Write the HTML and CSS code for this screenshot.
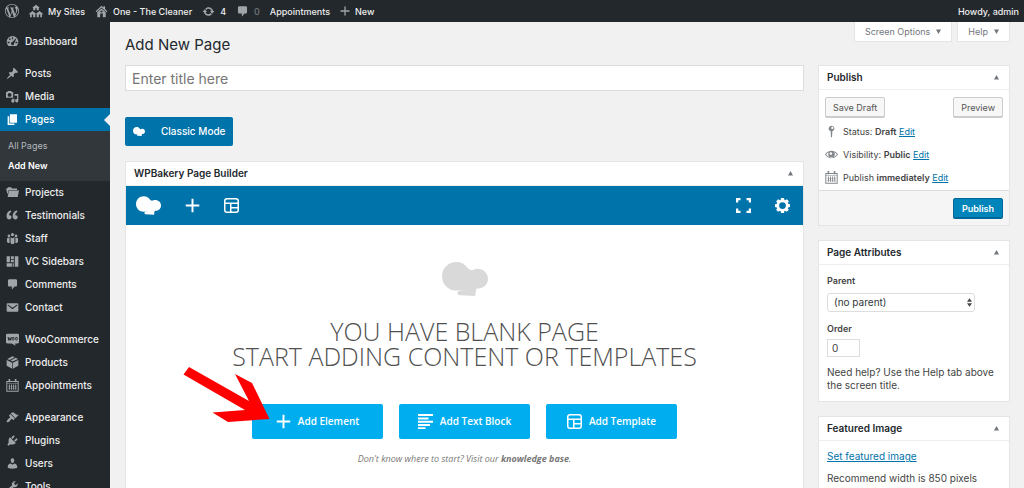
FILE: index.html
```html
<!DOCTYPE html>
<html lang="en">
<head>
    <meta charset="utf-8">
    <title>Add New Page</title>
    <link rel="stylesheet" href="styles.css">
</head>
<body>
<svg class="sprite" aria-hidden="true">
    <symbol id="i-wp" viewBox="0 0 20 20"><path d="M20 10c0-5.51-4.49-10-10-10C4.48 0 0 4.49 0 10c0 5.52 4.48 10 10 10 5.51 0 10-4.48 10-10zM7.78 15.37L4.37 6.22c.55-.02 1.17-.08 1.17-.08.5-.06.44-1.13-.06-1.11 0 0-1.45.11-2.37.11-.18 0-.37 0-.58-.01C4.12 2.69 6.87 1.11 10 1.11c2.33 0 4.45.87 6.05 2.34-.68-.11-1.65.39-1.65 1.58 0 .74.45 1.36.9 2.1.35.61.55 1.36.55 2.46 0 1.49-1.4 5-1.4 5l-3.03-8.37c.54-.02.82-.17.82-.17.5-.05.44-1.25-.06-1.22 0 0-1.44.12-2.38.12-.87 0-2.33-.12-2.33-.12-.5-.03-.56 1.2-.06 1.22l.92.08 1.26 3.41zM17.41 10c.24-.64.74-1.87.43-4.25.7 1.29 1.05 2.71 1.05 4.25 0 3.29-1.73 6.24-4.4 7.78.97-2.59 1.94-5.2 2.92-7.78zM6.1 18.09C3.12 16.65 1.11 13.53 1.11 10c0-1.3.23-2.48.72-3.59C3.25 10.3 4.67 14.2 6.1 18.09zm4.03-6.63l2.58 6.98c-.86.29-1.76.45-2.71.45-.79 0-1.57-.11-2.29-.33.81-2.38 1.62-4.74 2.42-7.1z"/></symbol>
    <symbol id="i-sites" viewBox="0 0 20 20"><path fill-rule="evenodd" d="M10 1l5 4-.8 1L14 5.800V9H6V5.800L5.800 6 5 5zM9 6v3h2V6zM5 10l5 4-.8 1-.2-.2V19H1.500v-4.200L.8 15 0 14zM4 15v4h2v-4zM15 10l5 4-.8 1-.7-.2V19H11v-4.200l-.2.2-.8-1zM14 15v4h2v-4z"/></symbol>
    <symbol id="i-home" viewBox="0 0 20 20"><path fill-rule="evenodd" d="M10 1l3 2.800V2h2.500v4.200L19 9.500 17.800 11 10 4 2.200 11 1 9.500zM10 5.500l6.500 5.800V19h-13v-7.700zM8 13v6h4v-6zM8.500 9v2h3V9z"/></symbol>
    <symbol id="i-update" viewBox="0 0 20 20"><path d="M10.200 3.280c3.530 0 6.430 2.610 6.920 6h2.080l-3.500 4-3.500-4h2.320c-.45-1.970-2.210-3.450-4.320-3.450-1.450 0-2.730.71-3.540 1.780L4.950 5.660C6.230 4.200 8.110 3.280 10.200 3.280zm-.4 13.440c-3.520 0-6.430-2.610-6.920-6H.8l3.500-4c1.170 1.330 2.330 2.670 3.500 4H5.480c.45 1.970 2.210 3.450 4.320 3.450 1.450 0 2.730-.71 3.540-1.780l1.710 1.950c-1.280 1.460-3.150 2.380-5.250 2.380z"/></symbol>
    <symbol id="i-comment" viewBox="0 0 20 20"><path d="M5 2h10c1.100 0 2 .9 2 2v7c0 1.100-.9 2-2 2h-2l-4 5v-5H5c-1.100 0-2-.9-2-2V4c0-1.100.9-2 2-2z"/></symbol>
    <symbol id="i-plus" viewBox="0 0 20 20"><path d="M8.700 1h2.600v7.700H19v2.600h-7.700V19H8.700v-7.700H1V8.700h7.700z"/></symbol>
    <symbol id="i-dashboard" viewBox="0 0 20 20"><path fill-rule="evenodd" d="M3.800 17h12.400A9 9 0 0 0 19 10.500 9 9 0 0 0 1 10.500 9 9 0 0 0 3.800 17zM9 3.500h2v3H9zM4.300 6l1.400-1.400L7.500 6.500 6 8zM2.500 10.500h3v2h-3zM14.500 10.500h3v2h-3zM14.800 5.200l1 1-3.300 6.300a2.500 2.500 0 1 1-2.800-1.800z"/></symbol>
    <symbol id="i-pin" viewBox="0 0 20 20"><path d="M10.440 3.020l1.820-1.820 6.360 6.350-1.830 1.820c-1.050-.68-2.480-.57-3.410.36l-.75.75c-.92.93-1.040 2.350-.35 3.410l-1.830 1.820-2.410-2.410-2.800 2.790c-.42.42-3.380 2.710-3.800 2.290s1.860-3.390 2.280-3.810l2.790-2.790L4.100 9.360l1.830-1.820c1.050.69 2.480.57 3.400-.36l.75-.75c.93-.92 1.050-2.350.36-3.410z"/></symbol>
    <symbol id="i-media" viewBox="0 0 20 20"><path fill-rule="evenodd" d="M0 3h2l1-1.500h5L9 3h2v9H0zM5.500 4.500a3 3 0 1 0 0 6 3 3 0 0 0 0-6zM13 6h6v10.500a2.500 2.500 0 1 1-2-2.400V9h-4zM9 13.500h4v3.300a2.500 2.500 0 1 1-2-2.300H9z"/></symbol>
    <symbol id="i-page" viewBox="0 0 20 20"><path d="M6 15V2h11v13H6zm-1 1h8v2.500H2.500V5H5v11z"/></symbol>
    <symbol id="i-folder" viewBox="0 0 20 20"><path d="M0 4h2l1-2h5l1 2h8v2H4L2.500 13zM4.500 7H20l-2 10H2.500z"/></symbol>
    <symbol id="i-quote" viewBox="0 0 20 20"><path d="M8.540 12.740c0-.87-.24-1.610-.72-2.220-.73-.92-2.140-1.030-2.960-.85-.34-1.930 1.300-4.390 3.420-5.450L6.650 1.940C3.450 3.460.31 6.960.85 11.370 1.190 14.160 2.800 16 5.080 16c1 0 1.830-.29 2.480-.88.66-.59.98-1.380.98-2.380zm9.430 0c0-.87-.24-1.610-.72-2.220-.73-.92-2.140-1.030-2.960-.85-.34-1.930 1.300-4.390 3.420-5.450l-1.630-2.280c-3.200 1.520-6.340 5.020-5.800 9.430.34 2.790 1.950 4.630 4.230 4.630 1 0 1.830-.29 2.480-.88.66-.59.98-1.380.98-2.380z"/></symbol>
    <symbol id="i-staff" viewBox="0 0 20 20"><circle cx="10" cy="4" r="2.500"/><circle cx="4.500" cy="6" r="2"/><circle cx="15.500" cy="6" r="2"/><path d="M7 8l3 1.500L13 8v8l-1 2.500H8L7 16zM1.500 9.500l4-1V17H3l-1.500-2zM18.500 9.500l-4-1V17H17l1.500-2z"/></symbol>
    <symbol id="i-sidebars" viewBox="0 0 20 20"><path d="M1 2h5v9H1zM1 12.500h8V18H1zM7.500 2H12v4H7.500zM7.500 7.200H12V11H7.500zM13.500 2H19v16h-5.500zM10.200 12.500H12V18h-1.800z"/></symbol>
    <symbol id="i-mail" viewBox="0 0 20 20"><path fill-rule="evenodd" d="M2.500 3.500h15A1.500 1.500 0 0 1 19 5v10a1.500 1.500 0 0 1-1.500 1.500h-15A1.500 1.500 0 0 1 1 15V5a1.500 1.500 0 0 1 1.500-1.500zM3 5.200L2.300 6.500 10 12.800l7.700-6.300L17 5.200 10 10.500z"/></symbol>
    <symbol id="i-woo" viewBox="0 0 20 20"><path fill-rule="evenodd" d="M2 1h16a2 2 0 0 1 2 2v11a2 2 0 0 1-2 2h-4l.5 3.500L9 16H2a2 2 0 0 1-2-2V3a2 2 0 0 1 2-2zM2.500 6l1 5.500h1.700L6 9.500l.6 2h1.200L9 6H7.800l-.6 3L6.500 7h-1l-.8 2.500L4 6zM11 6a2 2.700 0 1 0 .1 0zm0 1.500a.8 1.300 0 1 1-.1 0zM16 6a2 2.700 0 1 0 .1 0zm0 1.500a.8 1.300 0 1 1-.1 0z"/></symbol>
    <symbol id="i-box" viewBox="0 0 20 20"><path d="M10 .5l3.500 1.500-8 4L2 4.800zM15 2.700l3.500 2L10 8.500 7 7zM1 6.200l8.500 4V19.500L1 15zM19 6.200V15l-8.500 4.500v-9.300z"/></symbol>
    <symbol id="i-calendar" viewBox="0 0 20 20"><path fill-rule="evenodd" d="M4 0h2.500v3h7V0H16v3h3.500v16.500H.5V3H4zM2 7v11h16V7zM2 4.500V6h16V4.500h-2V5h-2.500v-.5h-7V5H4v-.5zM4.500 8.500H6v8H4.500zM7.800 8.500h1.500v8H7.800zM11 8.500h1.500v8H11zM14.200 8.500h1.500v8h-1.500z"/><path d="M3 11h14v.8H3zM3 14h14v.8H3z" opacity=".6"/></symbol>
    <symbol id="i-brush" viewBox="0 0 20 20"><path d="M14.480 11.060L7.410 3.990l1.500-1.500c.5-.56 2.300-.47 3.510.32 1.210.8 1.430 1.280 2.910 2.100 1.180.64 2.450 1.260 4.450.85zm-.71.71L6.700 4.700 4.930 6.470c-.39.39-.39 1.020 0 1.410l1.060 1.060c.39.39.39 1.030 0 1.420-.6.6-1.430 1.110-2.210 1.690-.35.26-.7.53-1.010.84C1.430 14.230.4 16.080 1.400 17.070c.99 1 2.840-.03 4.180-1.360.31-.31.58-.66.85-1.020.57-.78 1.080-1.610 1.690-2.210.39-.39 1.020-.39 1.410 0l1.060 1.060c.39.39 1.020.39 1.410 0z"/></symbol>
    <symbol id="i-plugin" viewBox="0 0 20 20"><path d="M13.110 4.360L9.870 7.600 8 5.730l3.240-3.240c.35-.34 1.050-.2 1.560.32.52.51.66 1.210.31 1.550zm-8 1.770l.91-1.120 9.010 9.010-1.190.84c-.71.71-2.630 1.160-3.820 1.160H6.140L4.900 17.260c-.59.59-1.540.59-2.120 0-.59-.58-.59-1.530 0-2.120l1.240-1.240v-3.880c0-1.130.4-3.190 1.090-3.890zm7.260 3.970l3.240-3.240c.34-.35 1.040-.21 1.550.31.52.51.66 1.210.31 1.550l-3.240 3.250z"/></symbol>
    <symbol id="i-user" viewBox="0 0 20 20"><path d="M10 9.250c-2.270 0-2.730-3.440-2.730-3.440C7 4.020 7.820 2 9.970 2c2.160 0 2.980 2.020 2.710 3.810 0 0-.41 3.440-2.680 3.440zm0 2.570L12.720 10c2.390 0 4.520 2.330 4.520 4.530v2.490s-3.650 1.130-7.240 1.130c-3.650 0-7.240-1.130-7.240-1.130v-2.490c0-2.250 1.940-4.480 4.470-4.480z"/></symbol>
    <symbol id="i-tools" viewBox="0 0 20 20"><path d="M16.680 9.770c-1.340 1.340-3.300 1.670-4.950.99l-5.410 6.520c-.99.99-2.590.99-3.580 0s-.99-2.590 0-3.570l6.520-5.420c-.68-1.650-.35-3.610.99-4.950 1.280-1.280 3.120-1.620 4.720-1.060l-2.890 2.890 2.820 2.820 2.860-2.870c.53 1.580.18 3.390-1.080 4.650z"/></symbol>
    <symbol id="i-post-status" viewBox="0 0 20 20"><path fill-rule="evenodd" d="M10 1a4.500 4.500 0 0 1 1.300 8.800L10.800 19H9.200l-.5-9.200A4.500 4.500 0 0 1 10 1zm1.200 1.800a1.700 1.700 0 1 0 .1 0z"/></symbol>
    <symbol id="i-eye" viewBox="0 0 20 20"><path fill-rule="evenodd" d="M0 10c4.500-7.500 15.500-7.500 20 0-4.500 7.500-15.500 7.500-20 0zm1.800 0c2 2.800 4.500 4 8.200 4s6.200-1.200 8.200-4c-1.200-1.700-2.500-2.800-4.200-3.400a5 5 0 1 1-8 0C4.300 7.200 3 8.300 1.800 10zM9 6.500a2 2 0 1 0 .1 0z"/></symbol>
    <symbol id="i-layout" viewBox="0 0 20 20"><g fill="none" stroke="currentColor" stroke-width="2"><rect x="1" y="1" width="18" height="18" rx="3"/><path d="M1 7h18M9 7v12M9 13h10"/></g></symbol>
    <symbol id="i-lines" viewBox="0 0 20 20"><path d="M0 0h20v2.700H0zM0 4.500h14v2.700H0zM0 9h20v2.700H0zM0 13.300h16V16H0zM0 17.600h10V20H0z"/></symbol>
    <symbol id="i-fullscreen" viewBox="0 0 20 20"><path d="M0 0h6v3H3v3H0zM14 0h6v6h-3V3h-3zM0 14h3v3h3v3H0zM17 14h3v6h-6v-3h3z"/></symbol>
    <symbol id="i-gear" viewBox="0 0 20 20"><path fill-rule="evenodd" d="M8 0h4l.6 2.700 1 .4L16 1.600l2.500 2.700-1.400 2.300.4 1L20 8.200v3.700l-2.600.6-.4 1 1.400 2.300-2.600 2.600-2.300-1.400-1 .4L12 20H8l-.6-2.600-1-.4-2.300 1.400-2.600-2.600 1.400-2.300-.4-1L0 11.900V8.200l2.600-.6.4-1-1.400-2.300 2.600-2.700 2.300 1.500 1-.4zM10 5.500a4.500 4.500 0 1 0 0 9 4.500 4.500 0 0 0 0-9z"/></symbol>
    <symbol id="i-bakery" viewBox="0 0 46 34"><path d="M14.500 0c5.500 0 8.500 2.600 11.500 6.200 1.800 2 3.800 2.600 6 1.200C38.500 5 46 9.500 46 16.800c0 6-4.600 9.800-10.500 9.800-1 0-1.300.5-1.500 1.500L33.200 34 18 33.200c-3-.2-3.600-3.400-.8-4.200 2-.6 3.800-.6 5.300-1.600C20 28.200 17 28.700 14 28.500 6 28.500 0 22 0 14.200S6 0 14.500 0z"/></symbol>
    <symbol id="i-up" viewBox="0 0 10 10"><path d="M5 0l5 9H0z"/></symbol>
    <symbol id="i-down" viewBox="0 0 10 10"><path d="M5 10L0 1h10z"/></symbol>
</svg>

<header class="adminbar">
    <a href="#" aria-label="WordPress"><svg class="icon icon-lg"><use href="#i-wp"/></svg></a>
    <a href="#"><svg class="icon icon-lg"><use href="#i-sites"/></svg>My Sites</a>
    <a href="#"><svg class="icon"><use href="#i-home"/></svg>One - The Cleaner</a>
    <a href="#"><svg class="icon"><use href="#i-update"/></svg>4</a>
    <a href="#"><svg class="icon"><use href="#i-comment"/></svg><span class="dim">0</span></a>
    <a href="#">Appointments</a>
    <a href="#"><svg class="icon icon-sm"><use href="#i-plus"/></svg>New</a>
    <a href="#" class="account">Howdy, admin</a>
</header>

<div class="wrap">
    <nav class="menu">
        <a href="#"><svg class="icon"><use href="#i-dashboard"/></svg>Dashboard</a>
        <hr>
        <a href="#"><svg class="icon"><use href="#i-pin"/></svg>Posts</a>
        <a href="#"><svg class="icon"><use href="#i-media"/></svg>Media</a>
        <a href="#" class="current"><svg class="icon"><use href="#i-page"/></svg>Pages</a>
        <div class="submenu">
            <a href="#">All Pages</a>
            <a href="#" class="active">Add New</a>
        </div>
        <a href="#"><svg class="icon"><use href="#i-folder"/></svg>Projects</a>
        <a href="#"><svg class="icon"><use href="#i-quote"/></svg>Testimonials</a>
        <a href="#"><svg class="icon"><use href="#i-staff"/></svg>Staff</a>
        <a href="#"><svg class="icon"><use href="#i-sidebars"/></svg>VC Sidebars</a>
        <a href="#"><svg class="icon"><use href="#i-comment"/></svg>Comments</a>
        <a href="#"><svg class="icon"><use href="#i-mail"/></svg>Contact</a>
        <hr>
        <a href="#"><svg class="icon"><use href="#i-woo"/></svg>WooCommerce</a>
        <a href="#"><svg class="icon"><use href="#i-box"/></svg>Products</a>
        <a href="#"><svg class="icon"><use href="#i-calendar"/></svg>Appointments</a>
        <hr>
        <a href="#"><svg class="icon"><use href="#i-brush"/></svg>Appearance</a>
        <a href="#"><svg class="icon"><use href="#i-plugin"/></svg>Plugins</a>
        <a href="#"><svg class="icon"><use href="#i-user"/></svg>Users</a>
        <a href="#"><svg class="icon"><use href="#i-tools"/></svg>Tools</a>
    </nav>

    <div class="content">
        <div class="page-top">
            <h1>Add New Page</h1>
            <div class="screen-tabs">
                <button type="button">Screen Options <svg class="caret"><use href="#i-down"/></svg></button>
                <button type="button">Help <svg class="caret"><use href="#i-down"/></svg></button>
            </div>
        </div>

        <div class="columns">
            <main>
                <input type="text" class="title-input" placeholder="Enter title here" aria-label="Title">
                <button type="button" class="classic-mode"><svg class="bakery-sm"><use href="#i-bakery"/></svg>Classic Mode</button>

                <section class="box">
                    <div class="box-header">
                        <h2>WPBakery Page Builder</h2>
                        <button type="button" class="toggle" aria-label="Toggle panel"><svg class="caret"><use href="#i-up"/></svg></button>
                    </div>
                    <div class="toolbar">
                        <a href="#" aria-label="WPBakery"><svg class="bakery-md"><use href="#i-bakery"/></svg></a>
                        <button type="button" aria-label="Add element"><svg class="tool"><use href="#i-plus"/></svg></button>
                        <button type="button" aria-label="Templates"><svg class="tool"><use href="#i-layout"/></svg></button>
                        <span class="spacer"></span>
                        <button type="button" aria-label="Full screen"><svg class="tool"><use href="#i-fullscreen"/></svg></button>
                        <button type="button" aria-label="Settings"><svg class="tool"><use href="#i-gear"/></svg></button>
                    </div>
                    <div class="blank">
                        <svg class="bakery-lg"><use href="#i-bakery"/></svg>
                        <h3>YOU HAVE BLANK PAGE<br>START ADDING CONTENT OR TEMPLATES</h3>
                        <div class="actions">
                            <button type="button"><svg class="tool"><use href="#i-plus"/></svg>Add Element</button>
                            <button type="button"><svg class="tool"><use href="#i-lines"/></svg>Add Text Block</button>
                            <button type="button"><svg class="tool"><use href="#i-layout"/></svg>Add Template</button>
                            <svg class="pointer" viewBox="0 0 87 57"><path d="M6 1l60 34-14-27 17 9 17.500 36L45 56 29.500 46.500 62 44 .5 8.500z"/></svg>
                        </div>
                        <p class="hint">Don't know where to start? Visit our <a href="#">knowledge base</a>.</p>
                    </div>
                </section>
            </main>

            <aside>
                <section class="box">
                    <div class="box-header">
                        <h2>Publish</h2>
                        <button type="button" class="toggle" aria-label="Toggle panel"><svg class="caret"><use href="#i-up"/></svg></button>
                    </div>
                    <div class="publish">
                        <div class="publish-buttons">
                            <button type="button" class="btn">Save Draft</button>
                            <button type="button" class="btn">Preview</button>
                        </div>
                        <p><svg class="icon"><use href="#i-post-status"/></svg><span>Status: <b>Draft</b> <a href="#">Edit</a></span></p>
                        <p><svg class="icon"><use href="#i-eye"/></svg><span>Visibility: <b>Public</b> <a href="#">Edit</a></span></p>
                        <p><svg class="icon"><use href="#i-calendar"/></svg><span>Publish <b>immediately</b> <a href="#">Edit</a></span></p>
                    </div>
                    <div class="publish-footer">
                        <button type="submit" class="btn btn-primary">Publish</button>
                    </div>
                </section>

                <section class="box">
                    <div class="box-header">
                        <h2>Page Attributes</h2>
                        <button type="button" class="toggle" aria-label="Toggle panel"><svg class="caret"><use href="#i-up"/></svg></button>
                    </div>
                    <div class="attributes">
                        <label for="parent">Parent</label>
                        <div class="select">
                            <select id="parent"><option>(no parent)</option></select>
                            <svg class="arrows" viewBox="0 0 6 10"><path d="M3 0l3 4H0zM3 10L0 6h6z"/></svg>
                        </div>
                        <label for="order">Order</label>
                        <input type="text" id="order" value="0">
                        <p>Need help? Use the Help tab above the screen title.</p>
                    </div>
                </section>

                <section class="box">
                    <div class="box-header">
                        <h2>Featured Image</h2>
                        <button type="button" class="toggle" aria-label="Toggle panel"><svg class="caret"><use href="#i-up"/></svg></button>
                    </div>
                    <div class="featured">
                        <a href="#">Set featured image</a>
                        <p>Recommend width is 850 pixels</p>
                    </div>
                </section>
            </aside>
        </div>
    </div>
</div>
</body>
</html>
```
FILE: styles.css
```css
:root {
    --dark: #23282d;
    --submenu: #32373c;
    --blue: #0073aa;
    --bright: #00aef0;
    --bg: #f1f1f1;
    --border: #e5e5e5;
    --text: #444;
}

* {
    margin: 0;
    padding: 0;
    box-sizing: border-box;
}

body {
    display: flex;
    flex-direction: column;
    height: 100vh;
    overflow: hidden;
    background: var(--bg);
    color: var(--text);
    font: 10px/13px Inter, "Liberation Sans", sans-serif;
}

button,
input,
select {
    font: inherit;
    color: inherit;
}

button {
    border: 0;
    background: none;
    cursor: pointer;
}

a {
    color: var(--blue);
}

svg {
    flex: none;
    fill: currentColor;
}

.sprite {
    position: absolute;
    width: 0;
    height: 0;
}

.icon {
    width: 13px;
    height: 13px;
}

.icon-lg {
    width: 14px;
    height: 14px;
}

.icon-sm {
    width: 10px;
    height: 10px;
}

.caret {
    width: 5px;
    height: 5px;
}

/* admin bar */
.adminbar {
    flex: none;
    display: flex;
    align-items: center;
    gap: 10px;
    height: 22px;
    padding: 0 5px;
    background: var(--dark);
}

.adminbar a {
    display: flex;
    align-items: center;
    gap: 5px;
    color: #eee;
    font-size: 9px;
    font-weight: 500;
    text-decoration: none;
}

.adminbar .icon {
    color: #a0a5aa;
}

.adminbar .dim {
    color: #72777c;
}

.adminbar .account {
    margin-left: auto;
}

.wrap {
    flex: 1;
    display: flex;
    min-height: 0;
}

/* side menu */
.menu {
    flex: none;
    width: 110px;
    padding-top: 8px;
    overflow: hidden;
    background: var(--dark);
}

.menu > a {
    display: flex;
    align-items: center;
    gap: 6px;
    height: 23px;
    padding-left: 6px;
    color: #eee;
    font-weight: 500;
    text-decoration: none;
}

.menu .icon {
    color: #a0a5aa;
}

.menu hr {
    height: 9px;
    border: 0;
}

.menu > .current {
    position: relative;
    background: var(--blue);
    color: #fff;
}

.menu .current .icon {
    color: #fff;
}

.menu .current::after {
    content: "";
    position: absolute;
    right: 0;
    top: 6px;
    border: 6px solid transparent;
    border-left: 0;
    border-right-color: var(--bg);
}

.submenu {
    display: grid;
    padding: 5px 8px;
    background: var(--submenu);
}

.submenu a {
    font-size: 9px;
    line-height: 20px;
    color: #b4b9be;
    text-decoration: none;
}

.submenu .active {
    color: #fff;
    font-weight: 600;
}

/* page */
.content {
    flex: 1;
    min-width: 0;
    padding: 0 14px 0 15px;
}

.page-top {
    display: flex;
    justify-content: space-between;
    height: 43px;
}

h1 {
    padding-top: 13px;
    color: #23282d;
    font-size: 15px;
    line-height: 20px;
    font-weight: 400;
}

.screen-tabs {
    display: flex;
    align-items: flex-start;
    gap: 5px;
}

.screen-tabs button {
    display: flex;
    align-items: center;
    gap: 6px;
    height: 20px;
    padding: 0 10px;
    border: 1px solid var(--border);
    border-top: 0;
    background: #fff;
    color: #72777c;
    font-size: 9px;
}

.columns {
    display: grid;
    grid-template-columns: minmax(0, 1fr) 192px;
    gap: 14px;
}

.title-input {
    display: block;
    width: 100%;
    height: 26px;
    padding: 0 6px;
    border: 1px solid #ddd;
    background: #fff;
    font-size: 14px;
}

.title-input::placeholder {
    color: #757575;
}

.classic-mode {
    display: flex;
    align-items: center;
    gap: 16px;
    height: 29px;
    margin: 26px 0 15px;
    padding: 0 8px;
    border-radius: 2px;
    background: var(--blue);
    color: #fff;
    font-weight: 500;
}

.bakery-sm {
    width: 12px;
    height: 9px;
}

.bakery-md {
    width: 25px;
    height: 19px;
}

.bakery-lg {
    width: 46px;
    height: 34px;
    color: #d9d9d9;
}

.box {
    border: 1px solid var(--border);
    background: #fff;
}

.box-header {
    display: flex;
    align-items: center;
    justify-content: space-between;
    height: 24px;
    padding: 0 8px;
    border-bottom: 1px solid #eee;
}

.box-header h2 {
    color: #23282d;
    font-size: 10px;
    font-weight: 600;
}

.toggle {
    display: flex;
    padding: 2px;
    color: #72777c;
}

/* builder */
.toolbar {
    display: flex;
    align-items: center;
    gap: 24px;
    height: 39px;
    padding: 0 13px 0 10px;
    background: var(--blue);
    color: #fff;
}

.toolbar a,
.toolbar button {
    display: flex;
    color: #fff;
}

.spacer {
    flex: 1;
}

.tool {
    width: 15px;
    height: 15px;
}

.blank {
    display: flex;
    flex-direction: column;
    align-items: center;
    padding: 37px 0 48px;
    font-family: "Open Sans", sans-serif;
}

.blank h3 {
    margin: 23px 0 35px;
    color: #505050;
    font-size: 25px;
    line-height: 25px;
    font-weight: 300;
    text-align: center;
}

.actions {
    position: relative;
    display: flex;
    gap: 16px;
}

.actions button {
    display: flex;
    align-items: center;
    justify-content: center;
    gap: 7px;
    width: 131px;
    height: 35px;
    border-radius: 2px;
    background: var(--bright);
    color: #fff;
    font-size: 10px;
    font-weight: 600;
}

/* red arrow lies over the first action */
.pointer {
    position: absolute;
    left: -69px;
    top: -38px;
    width: 87px;
    height: 57px;
    color: #fe0000;
    pointer-events: none;
}

.hint {
    margin-top: 13px;
    color: #777;
    font-size: 9px;
    font-style: italic;
}

.hint a {
    color: inherit;
    font-weight: 700;
    text-decoration: none;
}

/* sidebar boxes */
aside {
    display: grid;
    align-content: start;
    gap: 14px;
}

.btn {
    height: 20px;
    padding: 0 7px;
    border: 1px solid #ccc;
    border-radius: 2px;
    background: #f7f7f7;
    color: #555;
    font-size: 9px;
    box-shadow: 0 1px 0 #ccc;
}

.btn-primary {
    padding: 0 8px;
    border-color: #006799;
    background: #0085ba;
    color: #fff;
    font-weight: 600;
    box-shadow: 0 1px 0 #006799;
}

.publish {
    padding: 7px 6px 1px;
    font-size: 9px;
}

.publish-buttons {
    display: flex;
    justify-content: space-between;
    margin-bottom: 3px;
}

.publish p {
    display: flex;
    align-items: center;
    gap: 5px;
    height: 23px;
}

.publish .icon {
    color: #82878c;
}

.publish b {
    font-weight: 600;
}

.publish-footer {
    display: flex;
    justify-content: flex-end;
    padding: 7px 6px;
    border-top: 1px solid #ddd;
    background: #f5f5f5;
}

.attributes {
    display: grid;
    justify-items: start;
    padding: 9px 0 9px 8px;
}

.attributes label {
    font-size: 9px;
    font-weight: 600;
}

.select {
    position: relative;
    width: 148px;
    max-width: 100%;
    margin: 6px 0 10px;
}

.select select {
    display: block;
    width: 100%;
    height: 19px;
    padding: 0 6px;
    border: 1px solid #ddd;
    border-radius: 3px;
    background: #fff;
    color: #32373c;
    appearance: none;
}

.arrows {
    position: absolute;
    right: 3px;
    top: 5px;
    width: 5px;
    height: 9px;
    pointer-events: none;
}

.attributes input {
    width: 33px;
    height: 18px;
    margin: 4px 0 9px;
    padding: 0 4px;
    border: 1px solid #ddd;
}

.featured {
    padding: 9px 8px;
}

.featured p {
    margin-top: 9px;
}
```
